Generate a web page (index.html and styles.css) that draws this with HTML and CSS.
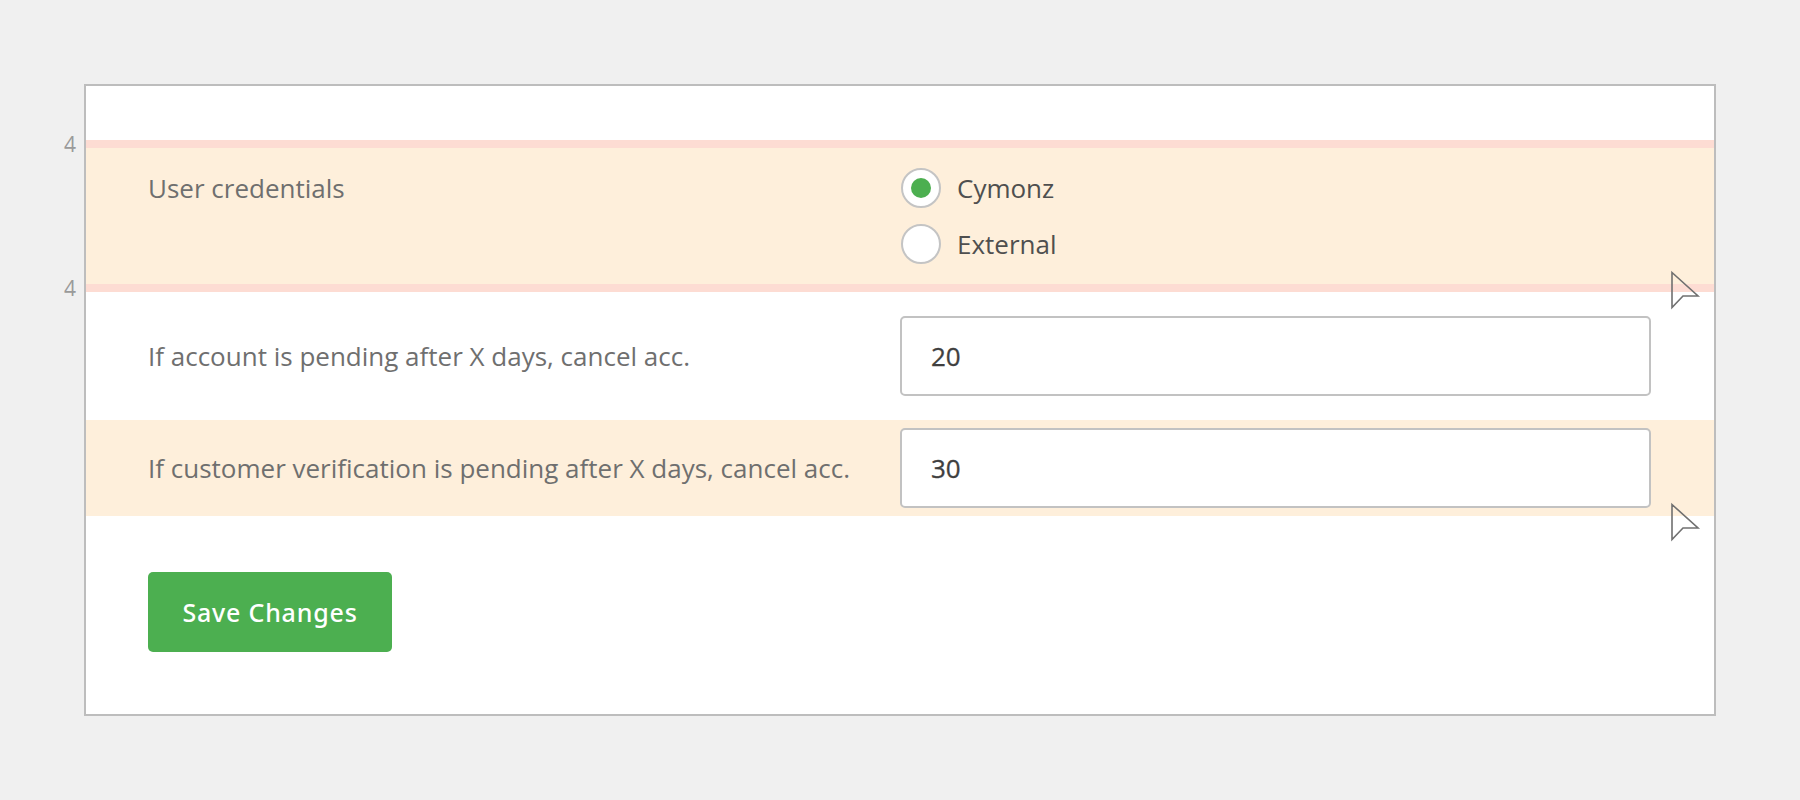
FILE: index.html
```html
<!DOCTYPE html>
<html lang="en">
<head>
<meta charset="utf-8">
<title>Account settings</title>
<link rel="stylesheet" href="styles.css">
</head>
<body>
<div class="page">
  <div class="panel">
    <div class="spacer-mark"><span class="spacer-num">4</span></div>
    <div class="row row-hl row-radio">
      <div class="label label-top">User credentials</div>
      <div class="radios">
        <label class="radio"><span class="dot checked"></span><span class="radio-text">Cymonz</span></label>
        <label class="radio"><span class="dot"></span><span class="radio-text">External</span></label>
      </div>
    </div>
    <div class="spacer-mark"><span class="spacer-num">4</span></div>
    <div class="row row-input-loose">
      <div class="label">If account is pending after X days, cancel acc.</div>
      <div class="field"><input class="input" type="text" value="20"></div>
    </div>
    <div class="row row-hl row-input-tight">
      <div class="label">If customer verification is pending after X days, cancel acc.</div>
      <div class="field"><input class="input" type="text" value="30"></div>
    </div>
    <div class="actions">
      <button class="btn">Save Changes</button>
    </div>
  </div>
  <svg class="cursor cursor-1" width="34" height="44" viewBox="0 0 34 44"><path d="M4 4.5 L30 28 L15 28 L4 39.5 Z" fill="none" stroke="#707070" stroke-width="1.6" stroke-linejoin="miter"/></svg>
  <svg class="cursor cursor-2" width="34" height="44" viewBox="0 0 34 44"><path d="M4 4.5 L30 28 L15 28 L4 39.5 Z" fill="none" stroke="#707070" stroke-width="1.6" stroke-linejoin="miter"/></svg>
</div>
</body>
</html>
```
FILE: styles.css
```css
* { box-sizing: border-box; }
html, body { margin: 0; padding: 0; }
body {
  background: #f0f0f0;
  font-family: "Open Sans", "Liberation Sans", sans-serif;
  width: 1800px;
  height: 800px;
  overflow: hidden;
}
.page {
  position: relative;
  padding: 84px 0 0 84px;
}
.panel {
  width: 1632px;
  height: 632px;
  background: #ffffff;
  border: 2px solid #bdbdbd;
  padding-top: 54px;
}
.spacer-mark {
  position: relative;
  height: 8px;
  background: #fddcd3;
}
.spacer-num {
  position: absolute;
  right: 100%;
  margin-right: 10px;
  top: 50%;
  transform: translateY(-50%);
  font-size: 21px;
  line-height: 1;
  color: #9a9a9a;
}
.row {
  display: grid;
  grid-template-columns: 752px 752px;
  padding: 0 62px;
  align-items: center;
}
.row-hl { background: #feefdb; }
.row-radio {
  padding-top: 20px;
  padding-bottom: 20px;
  align-items: start;
}
.row-input-loose { padding-top: 24px; padding-bottom: 24px; }
.row-input-tight { padding-top: 8px; padding-bottom: 8px; }
.label {
  font-size: 26px;
  line-height: 40px;
  color: #6f6f6f;
}
.radios {
  display: flex;
  flex-direction: column;
  gap: 16px;
  padding-left: 1px;
}
.radio {
  display: flex;
  align-items: center;
  height: 40px;
}
.dot {
  width: 40px;
  height: 40px;
  border-radius: 50%;
  border: 2px solid #c4c4c4;
  background: #ffffff;
  display: flex;
  align-items: center;
  justify-content: center;
  flex: none;
}
.dot.checked::after {
  content: "";
  width: 20px;
  height: 20px;
  border-radius: 50%;
  background: #4caf50;
}
.radio-text {
  margin-left: 16px;
  font-size: 26px;
  color: #4f4f4f;
}
.field { display: flex; }
.input {
  width: 751px;
  height: 80px;
  border: 2px solid #c2c2c2;
  border-radius: 5px;
  background: #ffffff;
  padding: 0 0 0 29px;
  font-family: "Open Sans", "Liberation Sans", sans-serif;
  font-size: 26px;
  font-weight: 400;
  color: #3f3f3f;
  -webkit-text-stroke: 0.3px #3f3f3f;
  outline: none;
}
.actions {
  padding: 56px 62px 0;
}
.btn {
  width: 244px;
  height: 80px;
  border: none;
  border-radius: 5px;
  background: #4caf50;
  color: #ffffff;
  font-family: "Noto Sans", "Liberation Sans", sans-serif;
  font-size: 25px;
  font-weight: 500;
  letter-spacing: 0.8px;
  cursor: pointer;
}
.cursor {
  position: absolute;
  left: 1668px;
}
.cursor-1 { top: 268px; }
.cursor-2 { top: 500px; }
```
